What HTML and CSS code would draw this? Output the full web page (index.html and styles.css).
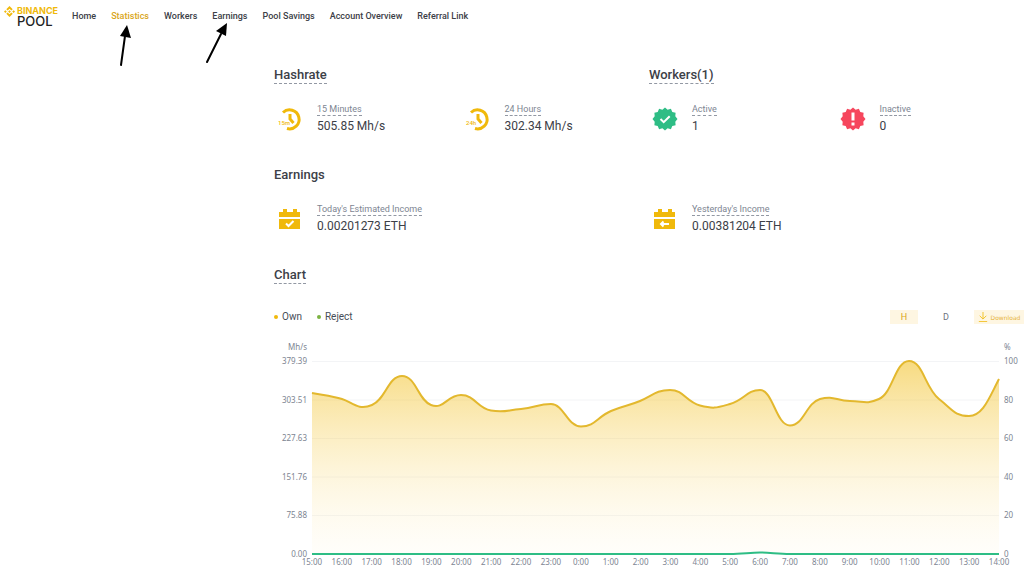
FILE: index.html
```html
<!DOCTYPE html>
<html lang="en">
<head>
<meta charset="utf-8">
<meta name="viewport" content="width=device-width, initial-scale=1">
<title>Binance Pool - Statistics</title>
<link rel="stylesheet" href="styles.css">
</head>
<body>
<header class="topbar">
  <a class="logo" href="#">
    <svg class="logo-mark" viewBox="0 0 24 24" aria-hidden="true"><path d="M12 0l7 7-3 3-4-4-4 4-3-3zM3 9l3 3-3 3-3-3zM12 9l3 3-3 3-3-3zM21 9l3 3-3 3-3-3zM8 14l4 4 4-4 3 3-7 7-7-7z"/></svg>
    <span class="logo-text"><span class="logo-brand">BINANCE</span><span class="logo-product">POOL</span></span>
  </a>
  <nav class="nav">
    <a href="#">Home</a>
    <a class="active" href="#">Statistics</a>
    <a href="#">Workers</a>
    <a href="#">Earnings</a>
    <a href="#">Pool Savings</a>
    <a href="#">Account Overview</a>
    <a href="#">Referral Link</a>
  </nav>
  <svg class="pointer pointer-statistics" viewBox="0 0 20 44" aria-hidden="true"><path class="shaft" d="M6 41L10 12"/><path d="M12 1L16 14 5 12z"/></svg>
  <svg class="pointer pointer-earnings" viewBox="0 0 28 42" aria-hidden="true"><path class="shaft" d="M4 40L18 12"/><path d="M24 1L23 14 13 9z"/></svg>
</header>
<main class="content">
  <div class="columns">
    <section class="section">
      <h2><span class="hint">Hashrate</span></h2>
      <div class="stats">
        <div class="stat">
          <svg class="icon" viewBox="0 0 24 24" aria-hidden="true"><path class="ring" d="M5 5.500A9.500 9.500 0 1 1 9 21.500"/><path class="hand" d="M12 7v5l3.500 4"/><text x="0" y="18">15m</text></svg>
          <div><div class="label"><span class="hint">15 Minutes</span></div><div class="value">505.85 Mh/s</div></div>
        </div>
        <div class="stat">
          <svg class="icon" viewBox="0 0 24 24" aria-hidden="true"><path class="ring" d="M5 5.500A9.500 9.500 0 1 1 9 21.500"/><path class="hand" d="M12 7v5l3.500 4"/><text x="0" y="18">24h</text></svg>
          <div><div class="label"><span class="hint">24 Hours</span></div><div class="value">302.34 Mh/s</div></div>
        </div>
      </div>
    </section>
    <section class="section">
      <h2><span class="hint">Workers(1)</span></h2>
      <div class="stats">
        <div class="stat">
          <svg class="icon ok" viewBox="0 0 24 24" aria-hidden="true"><path d="M12 .500l2.600 2.200 3.300-.900 1.400 3.100 3.300.900-.300 3.400 2.200 2.800-2.200 2.800.300 3.400-3.300.900-1.400 3.100-3.300-.900L12 23.500l-2.600-2.200-3.300.900-1.400-3.100-3.300-.900.300-3.400L-.500 12l2.200-2.800-.300-3.400 3.300-.900 1.400-3.100 3.300.900z"/><path class="mark" d="M7.500 12l3.200 3.200 6-6"/></svg>
          <div><div class="label"><span class="hint">Active</span></div><div class="value">1</div></div>
        </div>
        <div class="stat">
          <svg class="icon bad" viewBox="0 0 24 24" aria-hidden="true"><path d="M12 .500l2.600 2.200 3.300-.900 1.400 3.100 3.300.900-.300 3.400 2.200 2.800-2.200 2.800.300 3.400-3.300.900-1.400 3.100-3.300-.900L12 23.500l-2.600-2.200-3.300.900-1.400-3.100-3.300-.900.300-3.400L-.500 12l2.200-2.800-.300-3.400 3.300-.900 1.400-3.100 3.300.900z"/><path class="mark" d="M12 5.500v8M12 15.500v3"/></svg>
          <div><div class="label"><span class="hint">Inactive</span></div><div class="value">0</div></div>
        </div>
      </div>
    </section>
  </div>

  <section class="section">
    <h2>Earnings</h2>
    <div class="stats">
      <div class="stat">
        <svg class="icon" viewBox="0 0 24 24" aria-hidden="true"><path d="M1 5h4V2h4v3h6V2h4v3h3v5H1zM1 12h21v10H1z"/><path class="mark" d="M8 16.500l2.500 2.500 5-5"/></svg>
        <div><div class="label"><span class="hint">Today's Estimated Income</span></div><div class="value">0.00201273 ETH</div></div>
      </div>
      <div class="stat">
        <svg class="icon" viewBox="0 0 24 24" aria-hidden="true"><path d="M1 5h4V2h4v3h6V2h4v3h3v5H1zM1 12h21v10H1z"/><path class="mark" d="M16 17H8M10.500 14.500L8 17l2.500 2.500"/></svg>
        <div><div class="label"><span class="hint">Yesterday's Income</span></div><div class="value">0.00381204 ETH</div></div>
      </div>
    </div>
  </section>

  <section>
    <h2><span class="hint">Chart</span></h2>
    <div class="chart-bar">
      <ul class="legend"><li class="own">Own</li><li class="reject">Reject</li></ul>
      <div class="controls">
        <button class="range selected" type="button">H</button>
        <button class="range" type="button">D</button>
        <button class="download" type="button"><svg viewBox="0 0 12 12" aria-hidden="true"><path d="M6 0v8M2 4.500l4 4 4-4M1 11.500h10"/></svg>Download</button>
      </div>
    </div>
    <div class="chart">
      <div class="unit unit-left">Mh/s</div>
      <div class="unit unit-right">%</div>
      <div class="axis axis-left"><span>379.39</span><span>303.51</span><span>227.63</span><span>151.76</span><span>75.88</span><span>0.00</span></div>
      <svg class="plot" viewBox="0 0 687 193" preserveAspectRatio="none" role="img" aria-label="Hashrate over the last 24 hours">
        <defs><linearGradient id="fade" x1="0" y1="0" x2="0" y2="1"><stop offset="0" stop-color="#f0b90b" stop-opacity=".52"/><stop offset="1" stop-color="#fff3cf" stop-opacity=".1"/></linearGradient></defs>
        <path class="grid" d="M0 .500H687M0 39H687M0 77.500H687M0 116H687M0 154.500H687"/>
        <path fill="url(#fade)" d="M0 32C10 34 20 35 30 38S46 50 60 44S76 15 90 15S106 39 119 44S135 34 149 34S165 47 179 49.500S195 49 209 48S226 43 239 43S255 65.500 269 65.500S285 56 299 50S316 45 328 40S344 29 358 29S374 41 388 44.500S404 47 418 43S435 29 448 29S464 64.500 478 64.500S494 42 508 38S524 40 538 40S553 44 567 38S583 0 597 0S613 27 627 38S643 55 657 55S677 37 687 18V193H0z"/>
        <path class="line" d="M0 32C10 34 20 35 30 38S46 50 60 44S76 15 90 15S106 39 119 44S135 34 149 34S165 47 179 49.500S195 49 209 48S226 43 239 43S255 65.500 269 65.500S285 56 299 50S316 45 328 40S344 29 358 29S374 41 388 44.500S404 47 418 43S435 29 448 29S464 64.500 478 64.500S494 42 508 38S524 40 538 40S553 44 567 38S583 0 597 0S613 27 627 38S643 55 657 55S677 37 687 18"/>
        <path class="line rejected" d="M0 193H418C430 193 438 191.500 448 191.500S466 193 478 193H687"/>
      </svg>
      <div class="axis axis-right"><span>100</span><span>80</span><span>60</span><span>40</span><span>20</span><span>0</span></div>
      <div class="hours"><span>15:00</span><span>16:00</span><span>17:00</span><span>18:00</span><span>19:00</span><span>20:00</span><span>21:00</span><span>22:00</span><span>23:00</span><span>0:00</span><span>1:00</span><span>2:00</span><span>3:00</span><span>4:00</span><span>5:00</span><span>6:00</span><span>7:00</span><span>8:00</span><span>9:00</span><span>10:00</span><span>11:00</span><span>12:00</span><span>13:00</span><span>14:00</span></div>
    </div>
  </section>
</main>
</body>
</html>
```
FILE: styles.css
```css
* { box-sizing: border-box; }
body { margin: 0; background: #fff; color: #3c4047; font-family: Roboto, "Noto Sans", sans-serif; overflow-x: hidden; }
a { color: inherit; text-decoration: none; }
button { border: 0; padding: 0; background: none; font: inherit; cursor: pointer; }

.topbar { position: relative; display: flex; align-items: center; gap: 12px; height: 32px; padding-left: 4px; }
.logo { display: flex; gap: 2px; width: 56px; font-family: Inter, sans-serif; }
.logo-mark { width: 11px; height: 11px; flex: none; fill: #f0b90b; }
.logo-text { display: flex; flex-direction: column; }
.logo-brand { color: #f0b90b; font-size: 9px; line-height: 10px; font-weight: 700; }
.logo-product { font-size: 13px; line-height: 11px; font-weight: 500; color: #222; }
.nav { display: flex; gap: 15px; font-size: 9px; line-height: 12px; font-weight: 500; white-space: nowrap; }
.nav .active { color: #d9a520; }

.pointer { position: absolute; top: 24px; fill: #000; }
.pointer .shaft { stroke: #000; stroke-width: 2; stroke-linecap: round; }
.pointer-statistics { left: 115px; width: 20px; height: 44px; }
.pointer-earnings { left: 203px; top: 22px; width: 28px; height: 42px; }

.content { margin-left: 274px; padding-top: 35px; }
.columns, .stats { display: grid; grid-template-columns: 1fr 1fr; }
.section { padding-bottom: 30px; }
h2 { margin: 0; height: 17px; font-size: 13px; line-height: 16px; font-weight: 500; }
.hint { display: inline-block; border-bottom: 1px dashed #9298a3; }
.stats { margin-top: 17px; }
.stat { display: flex; align-items: center; gap: 15px; height: 36px; padding-left: 4px; }
.icon { width: 24px; height: 24px; flex: none; overflow: visible; fill: #f0b90b; }
.icon .ring { fill: none; stroke: #f0b90b; stroke-width: 3; }
.icon .hand { fill: none; stroke: #f0b90b; stroke-width: 3; }
.icon text { font-size: 6px; font-weight: 500; stroke: #fff; stroke-width: 1; paint-order: stroke; }
.icon .mark { fill: none; stroke: #fff; stroke-width: 2; }
.ok { fill: #2ebd85; }
.bad { fill: #f6465d; }
.bad .mark { stroke-width: 3; }
.label { height: 14px; font-size: 9px; line-height: 11px; color: #7d8592; }
.value { font-size: 12px; line-height: 16px; }

.chart-bar { display: flex; align-items: center; justify-content: space-between; margin-top: 26px; height: 14px; }
.legend { display: flex; gap: 15px; margin: 0; padding: 0; list-style: none; font-size: 10px; line-height: 14px; color: #474d57; }
.legend li { display: flex; align-items: center; gap: 4px; }
.legend li::before { content: ""; width: 4px; height: 4px; border-radius: 50%; background: #f0b90b; }
.legend .reject::before { background: #7cb342; }
.controls { display: flex; gap: 14px; }
.range { width: 28px; height: 14px; font-size: 9px; color: #6d7480; }
.selected { background: #fef6e2; color: #d9a520; }
.download { display: flex; align-items: center; justify-content: center; gap: 3px; width: 50px; height: 14px; background: #fef6e2; color: #e6b23a; font-family: "DejaVu Sans", sans-serif; font-size: 6px; }
.download svg { width: 10px; height: 10px; flex: none; fill: none; stroke: #f0b90b; stroke-width: 1; }

.chart { display: grid; grid-template-columns: 38px 1fr 25px; grid-template-rows: 12px 193px 12px; margin-top: 17px; row-gap: 8px; font-family: "Noto Sans", sans-serif; font-size: 8px; line-height: 12px; color: #7d8592; }
.unit-left { text-align: right; padding-right: 5px; }
.unit-right { grid-column: 3; padding-left: 5px; }
.axis { display: flex; flex-direction: column; justify-content: space-between; margin: -6px 0; }
.axis-left { text-align: right; padding-right: 5px; }
.axis-right { padding-left: 5px; }
.plot { width: 100%; height: 193px; overflow: visible; }
.plot .grid { stroke: #f3f4f6; stroke-width: 1; }
.plot .line { fill: none; stroke: #e3b82e; stroke-width: 2; }
.plot .rejected { stroke: #2ebd85; }
.hours { grid-column: 2; display: grid; grid-template-columns: repeat(24, 1fr); margin: -6px -15px 0; text-align: center; }
```
